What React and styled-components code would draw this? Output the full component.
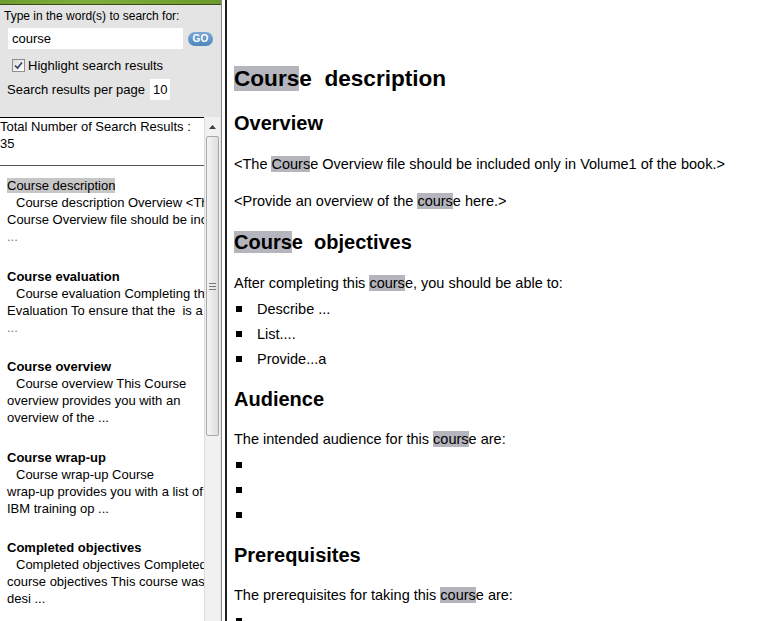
import React from "react";
import styled, { createGlobalStyle } from "styled-components";

const GlobalStyle = createGlobalStyle`
  html, body {
    margin: 0;
    padding: 0;
    background: #ffffff;
    overflow: hidden;
  }
  body {
    font-family: "Liberation Sans", Arial, sans-serif;
    color: #000;
  }
`;

const Page = styled.div`
  display: flex;
  width: 777px;
  height: 621px;
  overflow: hidden;
`;

const Sidebar = styled.div`
  display: flex;
  flex-direction: column;
  width: 221px;
  flex-shrink: 0;
  background: #e4e4e4;
  border-right: 1px solid #8a8a8a;
  font-size: 13px;
`;

const Banner = styled.div`
  height: 4px;
  background: linear-gradient(90deg, #6f9c2e, #80ad3a 40%, #6c9a2c);
  border-bottom: 1px solid #3a4a1c;
`;

const SearchForm = styled.div`
  display: flex;
  flex-direction: column;
  height: 112px;
  padding: 3px 0 0 4px;
  box-sizing: border-box;
`;

const Label = styled.div`
  font-size: 12px;
  line-height: 16px;
`;

const InputRow = styled.div`
  display: flex;
  align-items: center;
  gap: 5px;
  margin: 4px 0 0 4px;
  height: 21px;
`;

const TextInput = styled.div`
  width: ${({ $w }) => $w}px;
  height: 21px;
  box-sizing: border-box;
  background: #fff;
  padding-left: ${({ $pad }) => $pad}px;
  line-height: 21px;
  font-size: 13px;
`;

const GoButton = styled.div`
  width: 25px;
  height: 14px;
  border-radius: 7px;
  background: linear-gradient(#7aa8d6, #4f86bd);
  color: #fff;
  font-weight: bold;
  font-size: 10px;
  line-height: 14px;
  text-align: center;
  letter-spacing: 0.3px;
  margin-top: 1px;
`;

const CheckRow = styled.div`
  display: flex;
  align-items: center;
  gap: 3px;
  margin: 9px 0 0 8px;
  height: 15px;
`;

const CheckBox = styled.span`
  display: flex;
  align-items: center;
  justify-content: center;
  width: 13px;
  height: 13px;
  box-sizing: border-box;
  border: 1px solid #8f8f8f;
  background: linear-gradient(135deg, #dcdcdc, #ffffff);
`;

const PerPageRow = styled.div`
  display: flex;
  align-items: center;
  gap: 5px;
  margin: 6px 0 0 3px;
  height: 21px;
`;

const Results = styled.div`
  flex: 1;
  display: flex;
  min-height: 0;
  padding-right: 1px;
`;

const ResultsList = styled.div`
  width: 204px;
  background: #fff;
  border-top: 1px solid #000;
  overflow: hidden;
  line-height: 17px;
`;

const Divider = styled.div`
  height: 1px;
  background: #555;
  margin: 13px 0 11px;
`;

const Item = styled.div`
  padding-left: 7px;
  margin-bottom: 22.5px;
`;

const ItemTitle = styled.div`
  font-weight: ${({ $active }) => ($active ? "normal" : "bold")};
  white-space: nowrap;
  span {
    background: ${({ $active }) => ($active ? "#c6c6c6" : "transparent")};
  }
`;

const ItemLine = styled.div`
  white-space: pre;
  padding-left: ${({ $indent }) => ($indent ? "9px" : "0")};
  color: ${({ $dim }) => ($dim ? "#777" : "#000")};
`;

const Scrollbar = styled.div`
  display: flex;
  flex-direction: column;
  width: 16px;
  background: #f1f1f1;
  border-left: 1px solid #dcdcdc;
  box-sizing: border-box;
`;

const ScrollArrow = styled.div`
  height: 19px;
  display: flex;
  align-items: center;
  justify-content: center;
`;

const ScrollThumb = styled.div`
  height: 298px;
  margin: 0 1px;
  border: 1px solid #a8a8a8;
  border-radius: 2px;
  background: linear-gradient(90deg, #f4f4f4, #dedede);
  display: flex;
  align-items: center;
  justify-content: center;
`;

const Grip = styled.div`
  width: 7px;
  height: 7px;
  background: repeating-linear-gradient(#7a7a7a 0 1px, transparent 1px 3px);
`;

const Gutter = styled.div`
  width: 3px;
  flex-shrink: 0;
  background: #fff;
`;

const Main = styled.div`
  flex: 1;
  background: #fff;
  border-left: 2px solid #1f1f1f;
  padding: 66px 0 0 7px;
  font-size: 14.5px;
`;

const H1 = styled.h1`
  margin: 0 0 19px;
  font-size: 22.6px;
  line-height: 26px;
  font-weight: bold;
  white-space: pre;
`;

const H2 = styled.h2`
  margin: 0 0 ${({ $tight }) => ($tight ? "20px" : "21px")};
  font-size: 20px;
  line-height: 24px;
  font-weight: bold;
  white-space: pre;
`;

const P = styled.p`
  margin: 0 0 ${({ $lead }) => ($lead ? "9px" : "21px")};
  line-height: 16px;
`;

const Mark = styled.span`
  background: #b5b5bd;
`;

const List = styled.ul`
  display: flex;
  flex-direction: column;
  gap: 7px;
  margin: 0 0 19px;
  padding: 0;
  list-style: none;
`;

const ListItem = styled.li`
  display: flex;
  align-items: center;
  height: 18px;
`;

const Bullet = styled.span`
  width: 6px;
  height: 6px;
  background: #000;
  margin: 0 15px 0 2px;
  flex-shrink: 0;
`;

const results = [
  {
    title: "Course description",
    active: true,
    lines: ["Course description Overview <The", "Course Overview file should be included"],
    dots: true,
  },
  {
    title: "Course evaluation",
    lines: ["Course evaluation Completing the", "Evaluation To ensure that the  is a"],
    dots: true,
  },
  {
    title: "Course overview",
    lines: ["Course overview This Course", "overview provides you with an", "overview of the ..."],
  },
  {
    title: "Course wrap-up",
    lines: ["Course wrap-up Course", "wrap-up provides you with a list of", "IBM training op ..."],
  },
  {
    title: "Completed objectives",
    lines: ["Completed objectives Completed", "course objectives This course was", "desi ..."],
  },
];

function Hl({ children, rest }) {
  return (
    <>
      <Mark>{children}</Mark>
      {rest}
    </>
  );
}

function Bullets({ items }) {
  return (
    <List>
      {items.map((t, i) => (
        <ListItem key={i}>
          <Bullet />
          {t}
        </ListItem>
      ))}
    </List>
  );
}

export default function App() {
  return (
    <Page>
      <GlobalStyle />
      <Sidebar>
        <Banner />
        <SearchForm>
          <Label>Type in the word(s) to search for:</Label>
          <InputRow>
            <TextInput $w={175} $pad={4}>course</TextInput>
            <GoButton>GO</GoButton>
          </InputRow>
          <CheckRow>
            <CheckBox>
              <svg width="9" height="9" viewBox="0 0 9 9">
                <path d="M1 4.5 L3.5 7 L8 1.5" fill="none" stroke="#2f3f6a" strokeWidth="1.6" />
              </svg>
            </CheckBox>
            Highlight search results
          </CheckRow>
          <PerPageRow>
            Search results per page
            <TextInput $w={20} $pad={3}>10</TextInput>
          </PerPageRow>
        </SearchForm>
        <Results>
          <ResultsList>
            <div>Total Number of Search Results :</div>
            <div>35</div>
            <Divider />
            {results.map((r) => (
              <Item key={r.title}>
                <ItemTitle $active={r.active}>
                  <span>{r.title}</span>
                </ItemTitle>
                {r.lines.map((l, i) => (
                  <ItemLine key={i} $indent={i === 0}>
                    {l}
                  </ItemLine>
                ))}
                {r.dots && <ItemLine $dim>...</ItemLine>}
              </Item>
            ))}
          </ResultsList>
          <Scrollbar>
            <ScrollArrow>
              <svg width="7" height="4" viewBox="0 0 7 4">
                <path d="M0 4 L3.5 0 L7 4 Z" fill="#404040" />
              </svg>
            </ScrollArrow>
            <ScrollThumb>
              <Grip />
            </ScrollThumb>
          </Scrollbar>
        </Results>
      </Sidebar>
      <Gutter />
      <Main>
        <H1>
          <Hl rest={"e  description"}>Cours</Hl>
        </H1>
        <H2>Overview</H2>
        <P>
          {"<The "}
          <Hl rest={"e Overview file should be included only in Volume1 of the book.>"}>Cours</Hl>
        </P>
        <P>
          {"<Provide an overview of the "}
          <Hl rest={"e here.>"}>cours</Hl>
        </P>
        <H2>
          <Hl rest={"e  objectives"}>Cours</Hl>
        </H2>
        <P $lead>
          {"After completing this "}
          <Hl rest={"e, you should be able to:"}>cours</Hl>
        </P>
        <Bullets items={["Describe ...", "List....", "Provide...a"]} />
        <H2 $tight>Audience</H2>
        <P $lead>
          {"The intended audience for this "}
          <Hl rest={"e are:"}>cours</Hl>
        </P>
        <Bullets items={["", "", ""]} />
        <H2 $tight>Prerequisites</H2>
        <P $lead>
          {"The prerequisites for taking this "}
          <Hl rest={"e are:"}>cours</Hl>
        </P>
        <Bullets items={[""]} />
      </Main>
    </Page>
  );
}
